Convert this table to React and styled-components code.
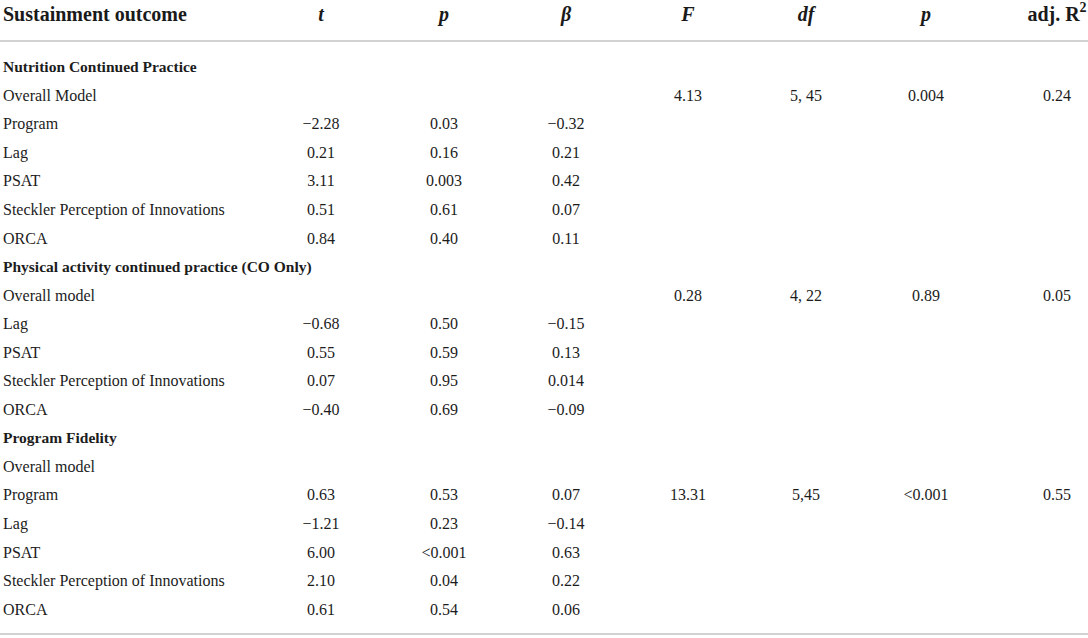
import styled, { createGlobalStyle } from "styled-components";

const GlobalStyle = createGlobalStyle`
  html, body {
    margin: 0;
    padding: 0;
    background: #ffffff;
  }
  body {
    font-family: "Liberation Serif", "Times New Roman", serif;
    color: #1c1c1c;
  }
`;

// column widths, tuned so the centred values line up with the screenshot
const widths = [260, 122, 124, 120, 124, 112, 128, 98];

const groups = [
  {
    title: "Nutrition Continued Practice",
    rows: [
      ["Overall Model", "", "", "", "4.13", "5, 45", "0.004", "0.24"],
      ["Program", "−2.28", "0.03", "−0.32"],
      ["Lag", "0.21", "0.16", "0.21"],
      ["PSAT", "3.11", "0.003", "0.42"],
      ["Steckler Perception of Innovations", "0.51", "0.61", "0.07"],
      ["ORCA", "0.84", "0.40", "0.11"],
    ],
  },
  {
    title: "Physical activity continued practice (CO Only)",
    rows: [
      ["Overall model", "", "", "", "0.28", "4, 22", "0.89", "0.05"],
      ["Lag", "−0.68", "0.50", "−0.15"],
      ["PSAT", "0.55", "0.59", "0.13"],
      ["Steckler Perception of Innovations", "0.07", "0.95", "0.014"],
      ["ORCA", "−0.40", "0.69", "−0.09"],
    ],
  },
  {
    title: "Program Fidelity",
    rows: [
      ["Overall model"],
      ["Program", "0.63", "0.53", "0.07", "13.31", "5,45", "<0.001", "0.55"],
      ["Lag", "−1.21", "0.23", "−0.14"],
      ["PSAT", "6.00", "<0.001", "0.63"],
      ["Steckler Perception of Innovations", "2.10", "0.04", "0.22"],
      ["ORCA", "0.61", "0.54", "0.06"],
    ],
  },
];

const Table = styled.table`
  width: 1088px;
  border-collapse: collapse;
  table-layout: fixed;
  border-bottom: 2px solid #d2d2d2;
`;

const Head = styled.thead`
  border-bottom: 2px solid #d2d2d2;
`;

const Th = styled.th`
  font-size: 20px;
  line-height: 24px;
  font-weight: bold;
  font-style: ${(p) => (p.$italic ? "italic" : "normal")};
  text-align: ${(p) => (p.$left ? "left" : "center")};
  padding: 2px 0 14px ${(p) => (p.$last ? "36px" : p.$left ? "3px" : "0")};
  color: #1a1a1a;
`;

const Sup = styled.sup`
  font-size: 14px;
  line-height: 0;
  vertical-align: 9px;
`;

const Spacer = styled.tr`
  height: ${(p) => p.$h}px;
`;

const Row = styled.tr`
  height: 28.55px;
`;

const Td = styled.td`
  font-size: 16px;
  line-height: 20px;
  padding: 0 0 0 ${(p) => (p.$last ? "36px" : p.$left ? "3px" : "0")};
  text-align: ${(p) => (p.$left ? "left" : "center")};
  white-space: nowrap;
  vertical-align: middle;
`;

const GroupTitle = styled.td`
  font-size: 15.5px;
  line-height: 20px;
  font-weight: bold;
  padding: 0 0 0 3px;
  text-align: left;
  white-space: nowrap;
`;

const App = () => {
  return (
    <>
      <GlobalStyle />
      <Table>
        <colgroup>
          {widths.map((w, i) => (
            <col key={i} style={{ width: w }} />
          ))}
        </colgroup>
        <Head>
          <tr>
            <Th $left>Sustainment outcome</Th>
            <Th $italic>t</Th>
            <Th $italic>p</Th>
            <Th $italic>β</Th>
            <Th $italic>F</Th>
            <Th $italic>df</Th>
            <Th $italic>p</Th>
            <Th $last>
              adj. R<Sup>2</Sup>
            </Th>
          </tr>
        </Head>
        <tbody>
          <Spacer $h={12}>
            <td colSpan={8} />
          </Spacer>
          {groups.map((g) => [
            <Row key={g.title}>
              <GroupTitle colSpan={8}>{g.title}</GroupTitle>
            </Row>,
            ...g.rows.map((r, ri) => (
              <Row key={g.title + ri}>
                {widths.map((_, ci) => (
                  <Td key={ci} $left={ci === 0} $last={ci === 7}>
                    {r[ci] || ""}
                  </Td>
                ))}
              </Row>
            )),
          ])}
          <Spacer $h={10}>
            <td colSpan={8} />
          </Spacer>
        </tbody>
      </Table>
    </>
  );
};

export default App;
